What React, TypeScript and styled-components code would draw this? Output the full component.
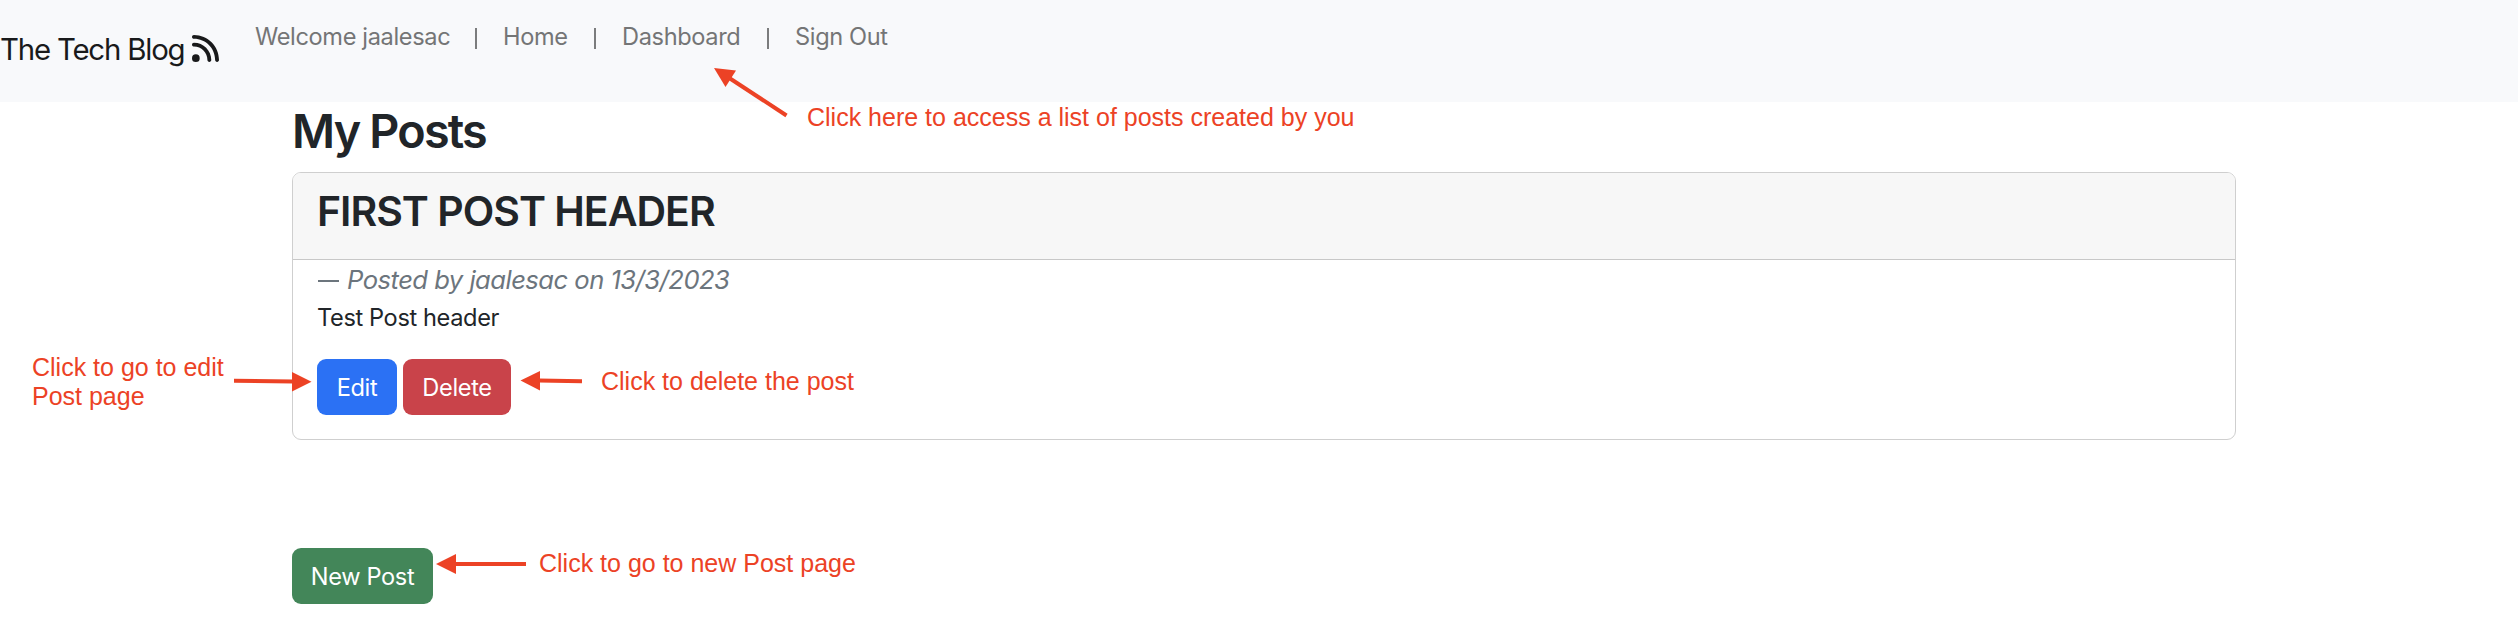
import React from 'react';
import styled, { createGlobalStyle } from 'styled-components';
import { FaRss } from 'react-icons/fa6';

const GlobalStyle = createGlobalStyle`
  *, *::before, *::after { box-sizing: border-box; }
  body {
    margin: 0;
    background: #fff;
    color: #212529;
    font-family: Inter, "Liberation Sans", sans-serif;
    font-size: 23.6px;
    line-height: 36px;
    overflow: hidden;
  }
`;

const Page = styled.div`
  position: relative;
  height: 628px;
  overflow: hidden;
`;

const Navbar = styled.header`
  display: flex;
  height: 102px;
  background: #f8f9fb;
  white-space: nowrap;
`;

const Brand = styled.div`
  display: flex;
  gap: 7px;
  width: 255px;
  padding-top: 27px;
  color: #191a1b;
  font-size: 29.4px;
  line-height: 45px;
  letter-spacing: -1.2px;

  span { width: 185px; }
  svg { flex: none; width: 27px; height: 31px; margin-top: 6px; }
`;

const NavList = styled.nav`
  display: flex;
  padding-top: 19px;
  color: #747576;
`;

const NavItem = styled.span<{ $width: number }>`
  width: ${p => p.$width}px;
  letter-spacing: -0.36px;
`;

const Divider = styled.span`
  width: 2px;
  height: 21px;
  margin: 9px 26px 0 0;
  background: #7b7c7d;
`;

const Container = styled.main`
  width: 1944px;
  margin-left: 292px;
`;

const PageTitle = styled.h2`
  margin: 0 0 12px;
  padding-top: 1px;
  font-size: 46.7px;
  font-weight: 600;
  line-height: 57px;
  letter-spacing: -1.8px;
`;

const Card = styled.article`
  height: 268px;
  border: 1px solid #cfcfcf;
  border-radius: 9px;
  overflow: hidden;
`;

const CardHeader = styled.div`
  height: 87px;
  padding: 12px 24px;
  background: #f7f7f7;
  border-bottom: 1px solid #c8c8c8;
`;

const CardTitle = styled.h3`
  margin: 0;
  font-size: 41px;
  font-weight: 600;
  line-height: 52px;
  letter-spacing: -1px;
`;

const CardBody = styled.div`
  padding: 0 24px;
`;

const Byline = styled.div`
  display: flex;
  height: 40px;
  color: #6c757d;
  font-size: 25.6px;
  line-height: 40px;
  letter-spacing: -0.52px;

  &::before {
    content: "";
    width: 21px;
    height: 2px;
    margin: 20px 8px 0 1px;
    background: #6c757d;
  }
`;

const PostText = styled.p`
  margin: 0 0 23px;
  letter-spacing: -0.38px;
`;

const Actions = styled.div`
  display: flex;
  gap: 6px;
`;

const Button = styled.button<{ $color: string; $width: number }>`
  width: ${p => p.$width}px;
  height: 56px;
  padding: 2px 0 0;
  border: 0;
  border-radius: 9px;
  background: ${p => p.$color};
  color: #fff;
  font: inherit;
  letter-spacing: -0.35px;
  white-space: nowrap;
`;

const Footer = styled.div`
  margin-top: 108px;
`;

const Note = styled.p<{ $x: number; $y: number }>`
  position: absolute;
  left: ${p => p.$x}px;
  top: ${p => p.$y}px;
  margin: 0;
  color: #ec4225;
  font-family: "Liberation Sans", Arial, sans-serif;
  font-size: 25px;
  line-height: 29px;
  white-space: nowrap;
`;

const Arrows = styled.svg`
  position: absolute;
  inset: 0;
  pointer-events: none;
`;

export default function App() {
  return (
    <Page>
      <GlobalStyle />
      <Navbar>
        <Brand><span>The Tech Blog</span><FaRss /></Brand>
        <NavList>
          <NavItem $width={220}>Welcome jaalesac</NavItem>
          <Divider />
          <NavItem $width={91}>Home</NavItem>
          <Divider />
          <NavItem $width={145}>Dashboard</NavItem>
          <Divider />
          <NavItem $width={95}>Sign Out</NavItem>
        </NavList>
      </Navbar>
      <Container>
        <PageTitle>My Posts</PageTitle>
        <Card>
          <CardHeader><CardTitle>FIRST POST HEADER</CardTitle></CardHeader>
          <CardBody>
            <Byline><em>Posted by jaalesac on 13/3/2023</em></Byline>
            <PostText>Test Post header</PostText>
            <Actions>
              <Button $color="#2b71f4" $width={80}>Edit</Button>
              <Button $color="#c9434a" $width={108}>Delete</Button>
            </Actions>
          </CardBody>
        </Card>
        <Footer><Button $color="#438659" $width={141}>New Post</Button></Footer>
      </Container>

      <Note $x={807} $y={103}>Click here to access a list of posts created by you</Note>
      <Note $x={32} $y={353}>Click to go to edit<br />Post page</Note>
      <Note $x={601} $y={367}>Click to delete the post</Note>
      <Note $x={539} $y={549}>Click to go to new Post page</Note>
      <Arrows width="2518" height="628" fill="#ec4225" stroke="none">
        <path d="M714 68L736 70.5L725.5 87Z" />
        <path d="M730 78.5L786.5 115.5" stroke="#ec4225" strokeWidth="4" />
        <path d="M311.5 381.7L292 372V391.5Z" />
        <path d="M234 380.8L293 381.6" stroke="#ec4225" strokeWidth="4" />
        <path d="M520.5 380.4L540 371V390.5Z" />
        <path d="M539 380.6L582 381.3" stroke="#ec4225" strokeWidth="4" />
        <path d="M436 564L456 554V574Z" />
        <path d="M455 564H526" stroke="#ec4225" strokeWidth="4" />
      </Arrows>
    </Page>
  );
}
